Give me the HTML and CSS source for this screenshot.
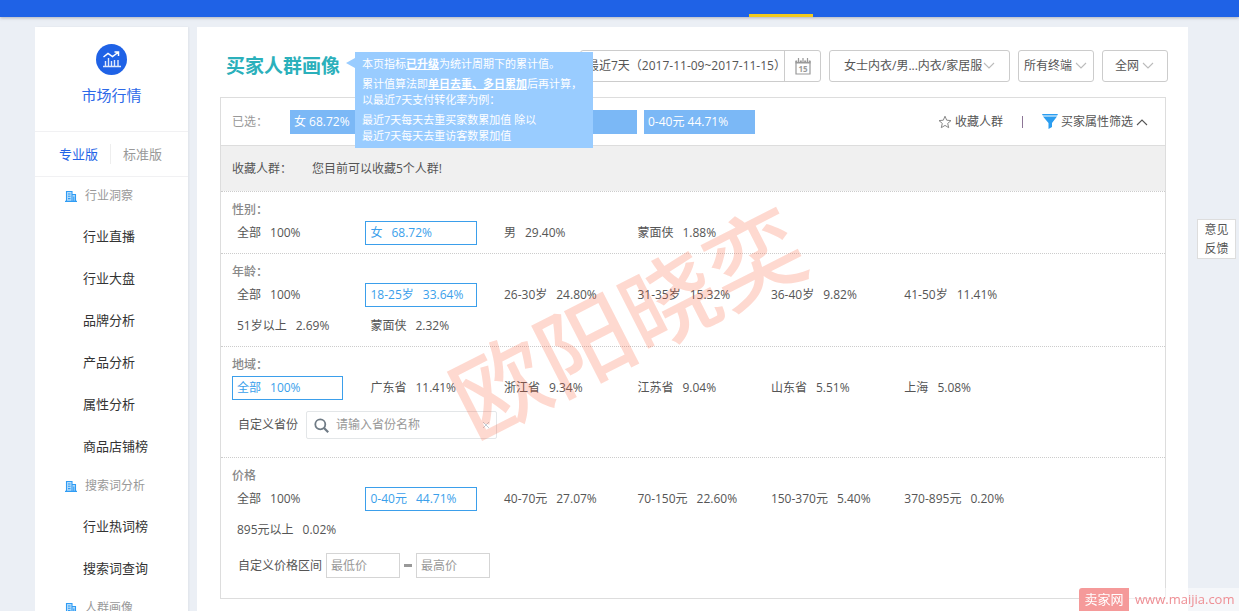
FILE: index.html
```html
<!DOCTYPE html>
<html lang="zh-CN">
<head>
<meta charset="utf-8">
<meta name="viewport" content="width=device-width, initial-scale=1">
<title>买家人群画像</title>
<link rel="stylesheet" href="styles.css">
</head>
<body>
<svg class="defs" aria-hidden="true">
  <symbol id="building" viewBox="0 0 12 12"><path d="M1.500 1H7v3h4v7H1.500z" fill="#b5dcfb"/><path d="M0 11.400h12M1.500 11V1.500H7V11M7 4.500h3.500V11M3 4h2.500M3 6.300h2.500M3 8.600h2.500M8.800 6.500V11" fill="none" stroke="#2f9cf4" stroke-width="1.100"/></symbol>
  <symbol id="chevron" viewBox="0 0 12 8"><path d="M1 1l5 5 5-5" fill="none" stroke="currentColor" stroke-width="1.1"/></symbol>
</svg>
<header class="topbar"><span class="topbar-active"></span></header>
<div class="page">
  <aside class="sidebar">
    <div class="brand">
      <svg class="brand-icon" viewBox="0 0 31 31" aria-hidden="true">
        <circle cx="15.5" cy="15.5" r="15.5" fill="#1f62e6"/>
        <path d="M7 22.5h18M9.5 22v-5M12.500 22v-8M15.500 22v-5M18.500 22v-6M22 22v-6" fill="none" stroke="#dfe9fc" stroke-width="1.400"/>
        <path d="M7.500 13l4.500-3.500 4.500 3L22 8.500M18.500 8h4v4" fill="none" stroke="#fff" stroke-width="1.500"/>
      </svg>
      <h2 class="brand-name">市场行情</h2>
    </div>
    <div class="editions">
      <a class="edition edition-on" href="#">专业版</a>
      <a class="edition" href="#">标准版</a>
    </div>
    <nav class="nav">
      <h3 class="nav-group"><svg class="nav-icon"><use href="#building"/></svg>行业洞察</h3>
      <a class="nav-item" href="#">行业直播</a>
      <a class="nav-item" href="#">行业大盘</a>
      <a class="nav-item" href="#">品牌分析</a>
      <a class="nav-item" href="#">产品分析</a>
      <a class="nav-item" href="#">属性分析</a>
      <a class="nav-item" href="#">商品店铺榜</a>
      <h3 class="nav-group"><svg class="nav-icon"><use href="#building"/></svg>搜索词分析</h3>
      <a class="nav-item" href="#">行业热词榜</a>
      <a class="nav-item" href="#">搜索词查询</a>
      <h3 class="nav-group"><svg class="nav-icon"><use href="#building"/></svg>人群画像</h3>
    </nav>
  </aside>

  <main class="main">
    <div class="toolbar">
      <div class="heading">
        <h1 class="title">买家人群画像</h1>
        <div class="tip" role="tooltip">
          <p>本页指标<b>已升级</b>为统计周期下的累计值。</p>
          <p>累计值算法即<b>单日去重、多日累加</b>后再计算，<br>以最近7天支付转化率为例：</p>
          <p>最近7天每天去重买家数累加值 除以<br>最近7天每天去重访客数累加值</p>
        </div>
      </div>
      <div class="date">
        <input class="date-input" type="text" aria-label="日期" value="最近7天（2017-11-09~2017-11-15）" readonly>
        <button class="date-button" type="button" aria-label="选择日期">
          <svg class="date-icon" viewBox="0 0 16 17" aria-hidden="true"><path d="M1 3.500h14V16H1z" fill="none" stroke="#999" stroke-width="1.200"/><path d="M.5 2.500h15v3H.5z" fill="#999"/><path d="M3.500 0v4M8 0v4M12.500 0v4" stroke="#fff" stroke-width="2.400"/><path d="M3.500 0v4M8 0v4M12.500 0v4" stroke="#999" stroke-width="1.200"/><text class="date-day" x="8" y="14" text-anchor="middle">15</text></svg>
        </button>
      </div>
      <div class="pick pick-category"><select class="pick-select" aria-label="类目"><option>女士内衣/男...内衣/家居服</option></select><svg class="pick-arrow"><use href="#chevron"/></svg></div>
      <div class="pick pick-device"><select class="pick-select" aria-label="终端"><option>所有终端</option></select><svg class="pick-arrow"><use href="#chevron"/></svg></div>
      <div class="pick pick-site"><select class="pick-select" aria-label="网站"><option>全网</option></select><svg class="pick-arrow"><use href="#chevron"/></svg></div>
    </div>

    <section class="panel">
      <div class="chosen">
        <span class="chosen-label">已选：</span>
        <div class="tags">
          <span class="tag">女 68.72%</span><span class="tag"></span><span class="tag"></span><span class="tag">0-40元 44.71%</span>
        </div>
        <button class="action" type="button"><svg class="star" viewBox="0 0 14 14" aria-hidden="true"><path d="M7 1.200l1.700 4 4.300.4-3.300 2.800 1 4.300L7 10.400l-3.700 2.300 1-4.300L1 5.600l4.300-.4z" fill="none" stroke="#888" stroke-width="1"/></svg>收藏人群</button>
        <span class="divider"></span>
        <button class="action" type="button"><svg class="funnel" viewBox="0 0 16 15" aria-hidden="true"><path d="M0 0h16l-.8 1.500H.8z" fill="#2b9df0"/><path d="M1 2.500h14L10 9v4l-3.500 2V9z" fill="#2b9df0"/></svg>买家属性筛选<svg class="caret-up"><use href="#chevron"/></svg></button>
      </div>
      <div class="saved"><span class="saved-label">收藏人群：</span><span>您目前可以收藏5个人群!</span></div>

      <div class="filter">
        <h4 class="filter-name">性别：</h4>
        <div class="options">
          <button class="option" type="button"><span>全部</span><span>100%</span></button>
          <button class="option option-on" type="button"><span>女</span><span>68.72%</span></button>
          <button class="option" type="button"><span>男</span><span>29.40%</span></button>
          <button class="option" type="button"><span>蒙面侠</span><span>1.88%</span></button>
        </div>
      </div>
      <div class="filter">
        <h4 class="filter-name">年龄：</h4>
        <div class="options">
          <button class="option" type="button"><span>全部</span><span>100%</span></button>
          <button class="option option-on" type="button"><span>18-25岁</span><span>33.64%</span></button>
          <button class="option" type="button"><span>26-30岁</span><span>24.80%</span></button>
          <button class="option" type="button"><span>31-35岁</span><span>15.32%</span></button>
          <button class="option" type="button"><span>36-40岁</span><span>9.82%</span></button>
          <button class="option" type="button"><span>41-50岁</span><span>11.41%</span></button>
          <button class="option" type="button"><span>51岁以上</span><span>2.69%</span></button>
          <button class="option" type="button"><span>蒙面侠</span><span>2.32%</span></button>
        </div>
      </div>
      <div class="filter">
        <h4 class="filter-name">地域：</h4>
        <div class="options">
          <button class="option option-on" type="button"><span>全部</span><span>100%</span></button>
          <button class="option" type="button"><span>广东省</span><span>11.41%</span></button>
          <button class="option" type="button"><span>浙江省</span><span>9.34%</span></button>
          <button class="option" type="button"><span>江苏省</span><span>9.04%</span></button>
          <button class="option" type="button"><span>山东省</span><span>5.51%</span></button>
          <button class="option" type="button"><span>上海</span><span>5.08%</span></button>
        </div>
        <div class="custom custom-region">
          <label for="province">自定义省份</label>
          <div class="search">
            <svg class="search-icon" viewBox="0 0 15 15" aria-hidden="true"><circle cx="6.300" cy="6.300" r="5" fill="none" stroke="#6f7b85" stroke-width="1.800"/><path d="M10 10l4.200 4.200" stroke="#6f7b85" stroke-width="2.200"/></svg>
            <input class="search-input" id="province" type="text" placeholder="请输入省份名称">
            <button class="search-clear" type="button" aria-label="清空"><svg viewBox="0 0 6 6"><path d="M0 0l6 6M6 0L0 6" stroke="#c4ccd4"/></svg></button>
          </div>
        </div>
      </div>
      <div class="filter">
        <h4 class="filter-name">价格</h4>
        <div class="options">
          <button class="option" type="button"><span>全部</span><span>100%</span></button>
          <button class="option option-on" type="button"><span>0-40元</span><span>44.71%</span></button>
          <button class="option" type="button"><span>40-70元</span><span>27.07%</span></button>
          <button class="option" type="button"><span>70-150元</span><span>22.60%</span></button>
          <button class="option" type="button"><span>150-370元</span><span>5.40%</span></button>
          <button class="option" type="button"><span>370-895元</span><span>0.20%</span></button>
          <button class="option" type="button"><span>895元以上</span><span>0.02%</span></button>
        </div>
        <div class="custom custom-price">
          <label for="low">自定义价格区间</label>
          <div class="range">
            <input class="price" id="low" type="text" placeholder="最低价">
            <span class="dash"></span>
            <input class="price" type="text" placeholder="最高价" aria-label="最高价">
          </div>
        </div>
      </div>
      <div class="watermark">欧阳晓奕</div>
    </section>
  </main>
</div>
<button class="feedback" type="button">意见<br>反馈</button>
<div class="site-mark"><span class="site-name">卖家网</span><span class="site-url">www.maijia.com</span></div>
</body>
</html>
```

FILE: styles.css
```css
* { box-sizing: border-box; }

body {
  margin: 0;
  height: 100vh;
  overflow: hidden;
  background: #ebeff5;
  color: #555;
  font: 12px/16px "Open Sans", "Noto Sans CJK SC", sans-serif;
}

h1, h2, h3, h4, p { margin: 0; font-weight: 400; }
a { color: inherit; text-decoration: none; }
button, input, select { font: inherit; color: inherit; }
button { border: 0; padding: 0; background: none; }
.defs { display: none; }

.topbar {
  position: relative;
  height: 17px;
  background: #1f62e6;
  box-shadow: 0 1px 3px rgba(60, 60, 80, 0.35);
}
.topbar-active {
  position: absolute;
  left: 749px;
  bottom: 0;
  width: 64px;
  height: 3px;
  background: #f2ca1d;
}

.page {
  display: flex;
  gap: 9px;
  padding: 10px 51px 0 35px;
}

/* Sidebar */
.sidebar {
  flex: 0 0 153px;
  background: #fff;
  box-shadow: 1px 0 2px rgba(0, 0, 0, 0.05);
}
.brand {
  display: flex;
  flex-direction: column;
  align-items: center;
  gap: 9px;
  height: 105px;
  padding-top: 17px;
  border-bottom: 1px solid #f1f1f3;
}
.brand-icon { width: 31px; height: 31px; }
.brand-name { font-size: 15px; line-height: 22px; color: #2d69e8; }
.editions {
  display: flex;
  align-items: center;
  height: 45px;
  padding: 0 24px;
  border-bottom: 1px solid #f1f1f3;
  font-size: 13px;
}
.edition { line-height: 20px; color: #999; padding-left: 12px; }
.edition-on { color: #2463e6; padding: 0 12px 0 0; border-right: 1px solid #eee; }
.nav-group {
  display: flex;
  align-items: center;
  gap: 8px;
  height: 38px;
  padding-left: 30px;
  font-size: 12px;
  color: #999;
}
.nav-icon { width: 12px; height: 12px; }
.nav-item {
  display: block;
  padding-left: 48px;
  font-size: 13px;
  line-height: 42px;
  color: #333;
}

/* Main column */
.main {
  flex: 1;
  min-width: 0;
  padding: 23px 22px 40px 23px;
  background: #fff;
}
.toolbar {
  display: flex;
  gap: 8px;
  margin-right: -2px;
}
.heading {
  position: relative;
  display: flex;
  align-items: center;
  margin: 0 auto 0 6px;
}
.title {
  font-size: 19px;
  line-height: 28px;
  font-weight: 700;
  color: #2bb0bb;
}
.tip {
  position: absolute;
  z-index: 2;
  top: 2px;
  left: 129px;
  width: 238px;
  display: grid;
  gap: 4px;
  padding: 4px 7px;
  background: #9cf;
  color: #fff;
  font-size: 11px;
  white-space: nowrap;
}
.tip::before {
  content: "";
  position: absolute;
  left: -9px;
  top: 6px;
  border: solid transparent;
  border-width: 5px 9px 5px 0;
  border-right-color: #9cf;
}
.tip b { font-weight: 700; text-decoration: underline; }

.date {
  display: flex;
  width: 241px;
  height: 32px;
  border: 1px solid #ccc;
  border-radius: 3px;
}
.date-input {
  flex: 1;
  min-width: 0;
  padding: 0 0 0 6px;
  border: 0;
  outline: 0;
  background: none;
}
.date-button {
  display: grid;
  place-items: center;
  width: 36px;
  border-left: 1px solid #ccc;
}
.date-icon { width: 16px; height: 17px; }
.date-day { font: 700 8px "Open Sans", sans-serif; fill: #999; }

.pick {
  position: relative;
  height: 32px;
}
.pick-select {
  width: 100%;
  height: 100%;
  border: 1px solid #ccc;
  border-radius: 3px;
  background: #fff;
  appearance: none;
}
.pick-arrow {
  position: absolute;
  top: 12px;
  width: 12px;
  height: 8px;
  color: #bbb;
  pointer-events: none;
}
.pick-category { width: 181px; }
.pick-device { width: 76px; }
.pick-site { width: 66px; }
.pick-category .pick-select { padding-left: 14px; }
.pick-device .pick-select { padding-left: 5px; }
.pick-site .pick-select { padding-left: 12px; }
.pick-category .pick-arrow { right: 15px; }
.pick-device .pick-arrow { right: 7px; }
.pick-site .pick-arrow { right: 14px; }

/* Filter panel */
.panel {
  position: relative;
  margin-top: 15px;
  border: 1px solid #ddd;
}
.chosen {
  display: flex;
  align-items: center;
  height: 48px;
  padding: 0 17px 0 11px;
  border-bottom: 1px solid #ddd;
}
.chosen-label { width: 58px; color: #999; }
.tags { display: flex; gap: 7px; margin-right: auto; }
.tag {
  width: 111px;
  height: 24px;
  padding-left: 4px;
  background: #7bb8f6;
  color: #fff;
  line-height: 24px;
}
.action { display: flex; align-items: center; gap: 3px; }
.star { width: 14px; height: 14px; }
.funnel { width: 16px; height: 15px; }
.caret-up { width: 12px; height: 8px; transform: rotate(180deg); }
.divider { width: 1px; height: 12px; margin: 0 19px; background: #8c7596; }

.saved {
  display: flex;
  align-items: center;
  height: 45px;
  padding-left: 11px;
  background: #f0f0f0;
}
.saved-label { width: 80px; }

.filter {
  padding: 10px 14% 8px 11px;
  border-top: 1px dotted #ccc;
}
.filter-name { color: #888; font-weight: 500; }
.options {
  display: grid;
  grid-template-columns: repeat(6, 1fr);
  row-gap: 7px;
  margin-top: 3px;
}
.option {
  display: flex;
  align-items: center;
  gap: 9px;
  height: 24px;
  margin-right: 22px;
  padding: 0 4px;
  border: 1px solid transparent;
  white-space: nowrap;
}
.option-on { border-color: #3b9feb; color: #3b9feb; }

.custom {
  display: flex;
  align-items: center;
  gap: 8px;
  margin-top: 11px;
  padding-left: 6px;
}
.custom-region { margin-bottom: 10px; }
.custom-price { margin-bottom: 12px; }
.search {
  display: flex;
  align-items: center;
  gap: 7px;
  width: 191px;
  height: 28px;
  padding: 0 7px;
  border: 1px solid #e3e6e8;
  border-radius: 2px;
}
.search-icon { width: 15px; height: 15px; }
.search-input { flex: 1; min-width: 0; padding: 0; border: 0; outline: 0; background: none; }
.search-clear { display: flex; width: 6px; height: 6px; }
input::placeholder { color: #999; opacity: 1; }
.custom-price { gap: 4px; }
.range { display: flex; align-items: center; gap: 4px; }
.price {
  width: 74px;
  height: 25px;
  padding: 0 4px;
  border: 1px solid #d5d5d5;
  background: #fff;
}
.dash { width: 8px; height: 3px; background: #999; }

.watermark {
  position: absolute;
  left: 216px;
  top: 176px;
  font-size: 95px;
  font-weight: 500;
  line-height: 95px;
  white-space: nowrap;
  color: rgba(250, 90, 50, 0.23);
  transform: rotate(-27deg);
  pointer-events: none;
}

/* Floating pieces */
.feedback {
  position: fixed;
  top: 219px;
  right: 3px;
  width: 39px;
  height: 40px;
  border: 1px solid #ddd;
  background: #fff;
  line-height: 19px;
}
.site-mark {
  position: fixed;
  right: 0;
  bottom: 0;
  display: flex;
  width: 160px;
  height: 23px;
  line-height: 23px;
  font-size: 13px;
  background: rgba(255, 255, 255, 0.5);
  white-space: nowrap;
}
.site-name {
  width: 50px;
  border-radius: 3px 0 0 0;
  background: #f59a9a;
  color: #fff;
  text-align: center;
}
.site-url { padding-left: 6px; color: #ee8e94; }
```
